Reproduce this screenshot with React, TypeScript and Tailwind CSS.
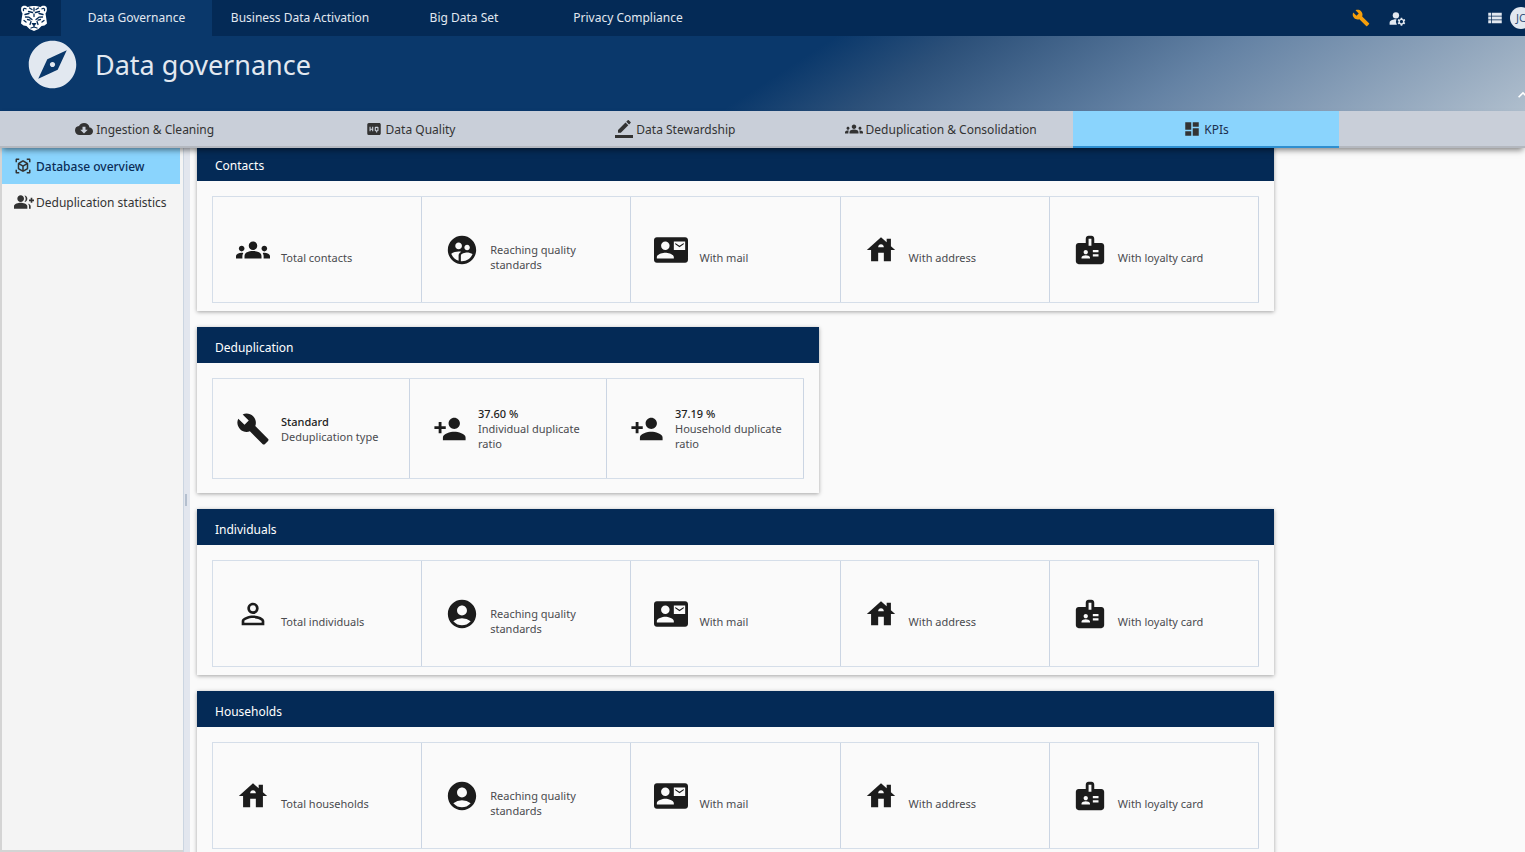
import type { IconType } from "react-icons";
import {
  MdAccountCircle,
  MdBadge,
  MdBuild,
  MdCloudDownload,
  MdContactMail,
  MdDashboard,
  MdExpandLess,
  MdExplore,
  MdGroupAdd,
  MdGroups,
  MdHighQuality,
  MdHouse,
  MdManageAccounts,
  MdPersonAdd,
  MdPersonOutline,
  MdSupervisedUserCircle,
  MdViewInAr,
  MdViewList,
} from "react-icons/md";

type Kpi = { icon: IconType; label: string; value?: string };

const navItems = ["Business Data Activation", "Big Data Set", "Privacy Compliance"];

function PencilLine({ className }: { className?: string }) {
  return (
    <svg viewBox="0 0 24 24" fill="currentColor" className={className} aria-hidden="true">
      <path d="M17.75 7 14 3.250l-10 10V17h3.750l10-10zm2.960-2.960a1 1 0 0 0 0-1.410L18.370.290a1 1 0 0 0-1.410 0L15 2.250 18.750 6l1.960-1.960z" />
      <path d="M0 20h24v4H0z" />
    </svg>
  );
}

const tabs = [
  { icon: MdCloudDownload, label: "Ingestion & Cleaning" },
  { icon: MdHighQuality, label: "Data Quality" },
  { icon: PencilLine, label: "Data Stewardship" },
  { icon: MdGroups, label: "Deduplication & Consolidation" },
  { icon: MdDashboard, label: "KPIs", active: true },
];

const reachKpis: Kpi[] = [
  { icon: MdContactMail, label: "With mail" },
  { icon: MdHouse, label: "With address" },
  { icon: MdBadge, label: "With loyalty card" },
];

const contacts: Kpi[] = [
  { icon: MdGroups, label: "Total contacts" },
  { icon: MdSupervisedUserCircle, label: "Reaching quality standards" },
  ...reachKpis,
];

const deduplication: Kpi[] = [
  { icon: MdBuild, label: "Deduplication type", value: "Standard" },
  { icon: MdPersonAdd, label: "Individual duplicate ratio", value: "37.60 %" },
  { icon: MdPersonAdd, label: "Household duplicate ratio", value: "37.19 %" },
];

const individuals: Kpi[] = [
  { icon: MdPersonOutline, label: "Total individuals" },
  { icon: MdAccountCircle, label: "Reaching quality standards" },
  ...reachKpis,
];

const households: Kpi[] = [
  { icon: MdHouse, label: "Total households" },
  { icon: MdAccountCircle, label: "Reaching quality standards" },
  ...reachKpis,
];

function TigerLogo() {
  return (
    <svg viewBox="0 0 28 28" className="size-7" fill="none" aria-hidden="true">
      <path
        d="M1.500 3C3 1.200 6 1.400 7.500 3 11 1.500 17 1.500 20.500 3 22 1.400 25 1.200 26.500 3 27.500 5.500 26.500 8 25.500 9.500L26.200 14 27 19.500 24.500 21.500 21.500 22 18.500 25 14 27 9.500 25 6.500 22 3.500 21.500 1 19.500 1.800 14 2.500 9.500C1.500 8 .500 5.500 1.500 3Z"
        fill="#fff"
      />
      <g stroke="#042a56" strokeWidth="1.300" strokeLinecap="round" strokeLinejoin="round">
        <path d="M3.500 6.500C3 4.500 4.500 3.800 6 4.800M24.500 6.500C25 4.500 23.500 3.800 22 4.800" />
        <path d="M9.500 4 12 5.500M18.500 4 16 5.500M8.500 7.500 12.500 8.500M19.500 7.500 15.500 8.500M14 4v3" />
        <path d="M5 10.500 9 9.500M23 10.500 19 9.500M14 10v2.500" />
        <path d="M5.500 13 9 13.200 12 15.500M22.500 13 19 13.200 16 15.500M7.500 15.500 10 16.200M20.500 15.500 18 16.200" />
        <path d="M4 16.500 6 18M24 16.500 22 18M11 17.500 10 20.500M17 17.500 18 20.500" />
        <path d="M14 21.500v1.500M11 24 14 23 17 24" />
      </g>
      <path d="M11.500 19h5L15 21.500h-2Z" fill="#042a56" />
    </svg>
  );
}

function KpiCell({ icon: Icon, label, value }: Kpi) {
  return (
    <li className="flex flex-1 items-center gap-[11px] border-r border-[#cbd5e3] pr-3 pl-[23px]">
      <Icon className="size-[34px] shrink-0 text-[#1c1c1c]" />
      <div className="text-[11px] leading-[15px] text-[#4a4b4f]">
        <p className="min-h-[15px] font-medium text-[#222]">{value}</p>
        <p>{label}</p>
      </div>
    </li>
  );
}

function KpiCard({ title, items, compact = false }: { title: string; items: Kpi[]; compact?: boolean }) {
  return (
    <section
      className={`flex h-[166px] w-full shrink-0 flex-col bg-[#fafafa] shadow-[0_1px_4px_rgba(0,0,0,0.35)] ${
        compact ? "max-w-[622px]" : "max-w-[1077px]"
      }`}
    >
      <h2 className="flex h-9 items-center bg-[#042a56] px-[18px] pt-1.5 text-white">{title}</h2>
      <div className={`flex grow px-[15px] pt-[15px] ${compact ? "pb-[14px]" : "pb-2"}`}>
        <ul className="flex grow border-y border-l border-[#d5dee9]">
          {items.map((item) => (
            <KpiCell key={item.label} {...item} />
          ))}
        </ul>
      </div>
    </section>
  );
}

export default function App() {
  return (
    <div className="flex h-screen flex-col overflow-hidden bg-[#fafafa] font-['Noto_Sans',sans-serif] text-xs text-[#333]">
      {/* Top navigation */}
      <header className="flex h-9 shrink-0 bg-[#042a56] text-[#e2e8f0]">
        <a href="#" aria-label="Home" className="flex w-[61px] items-center justify-center pl-1.5">
          <TigerLogo />
        </a>
        <nav className="flex">
          <a href="#" className="mr-1.5 flex w-[151px] items-center justify-center bg-[#0a386b]">
            Data Governance
          </a>
          {navItems.map((item) => (
            <a key={item} href="#" className="flex w-[164px] items-center justify-center">
              {item}
            </a>
          ))}
        </nav>
        <div className="ml-auto flex shrink-0 items-center">
          <button aria-label="Tools" className="mr-[18px] text-[#f59e0b]">
            <MdBuild className="size-[18px]" />
          </button>
          <button aria-label="Manage accounts" className="mr-[79px]">
            <MdManageAccounts className="size-[19px]" />
          </button>
          <button aria-label="List" className="mr-1.5">
            <MdViewList className="size-[18px]" />
          </button>
          <button className="-mr-[7px] size-[22px] rounded-full bg-[#e2e8f0] text-[11px] text-[#33517a]">JC</button>
        </div>
      </header>

      {/* Page title */}
      <div className="flex h-[75px] shrink-0 items-center bg-[linear-gradient(147deg,#0a386b_51%,#2c5079_59%,#6482a4_76%,#afbecd_100%)] pb-[18px] pl-6 text-[#e2e8f0]">
        <MdExplore className="size-[57px]" />
        <h1 className="pl-[14px] text-[27px]">Data governance</h1>
        <button aria-label="Collapse" className="-mr-2 mt-auto -mb-3 ml-auto text-white">
          <MdExpandLess className="size-5" />
        </button>
      </div>

      {/* Section tabs */}
      <nav className="relative z-10 h-[37px] shrink-0 border-b-2 border-[#b4b8bf] bg-[#c9cfd9] shadow-[0_4px_6px_-2px_rgba(0,0,0,0.5)]">
        <div className="ml-3 flex h-[37px] w-[87%]">
          {tabs.map(({ icon: Icon, label, active }) => (
            <a
              key={label}
              href="#"
              className={`flex flex-1 items-center justify-center gap-[3px] border-b-2 whitespace-nowrap ${
                active ? "border-[#2f8fd0] bg-[#8ad4fd] text-[#1c2f4d]" : "border-transparent"
              }`}
            >
              <Icon className="size-[18px] shrink-0 text-[#333]" />
              <span className="pt-0.5">{label}</span>
            </a>
          ))}
        </div>
      </nav>

      <div className="flex min-h-0 grow">
        {/* Sidebar */}
        <aside className="w-[183px] shrink-0 border-b-2 border-l-2 border-[#d4d4d4] bg-[#f4f4f4] pr-[3px]">
          <a href="#" className="flex h-9 items-center gap-1 bg-[#8ad4fd] px-3 font-medium text-[#0b2d57]">
            <MdViewInAr className="size-[18px] shrink-0 text-[#333]" />
            <span className="pt-0.5">Database overview</span>
          </a>
          <a href="#" className="flex h-9 items-center gap-0.5 px-3 whitespace-nowrap">
            <MdGroupAdd className="size-5 shrink-0" />
            <span className="pt-0.5">Deduplication statistics</span>
          </a>
        </aside>
        <div className="flex w-[7px] shrink-0 items-center border-l border-[#cbd5e1] bg-[#e2e6ee] pl-px">
          <span className="h-3 w-0.5 bg-[#b4bfce]" />
        </div>

        {/* KPI cards */}
        <main className="-mt-[3px] flex grow flex-col gap-4 overflow-hidden px-[7px]">
          <KpiCard title="Contacts" items={contacts} />
          <KpiCard title="Deduplication" items={deduplication} compact />
          <KpiCard title="Individuals" items={individuals} />
          <KpiCard title="Households" items={households} />
        </main>
      </div>
    </div>
  );
}
